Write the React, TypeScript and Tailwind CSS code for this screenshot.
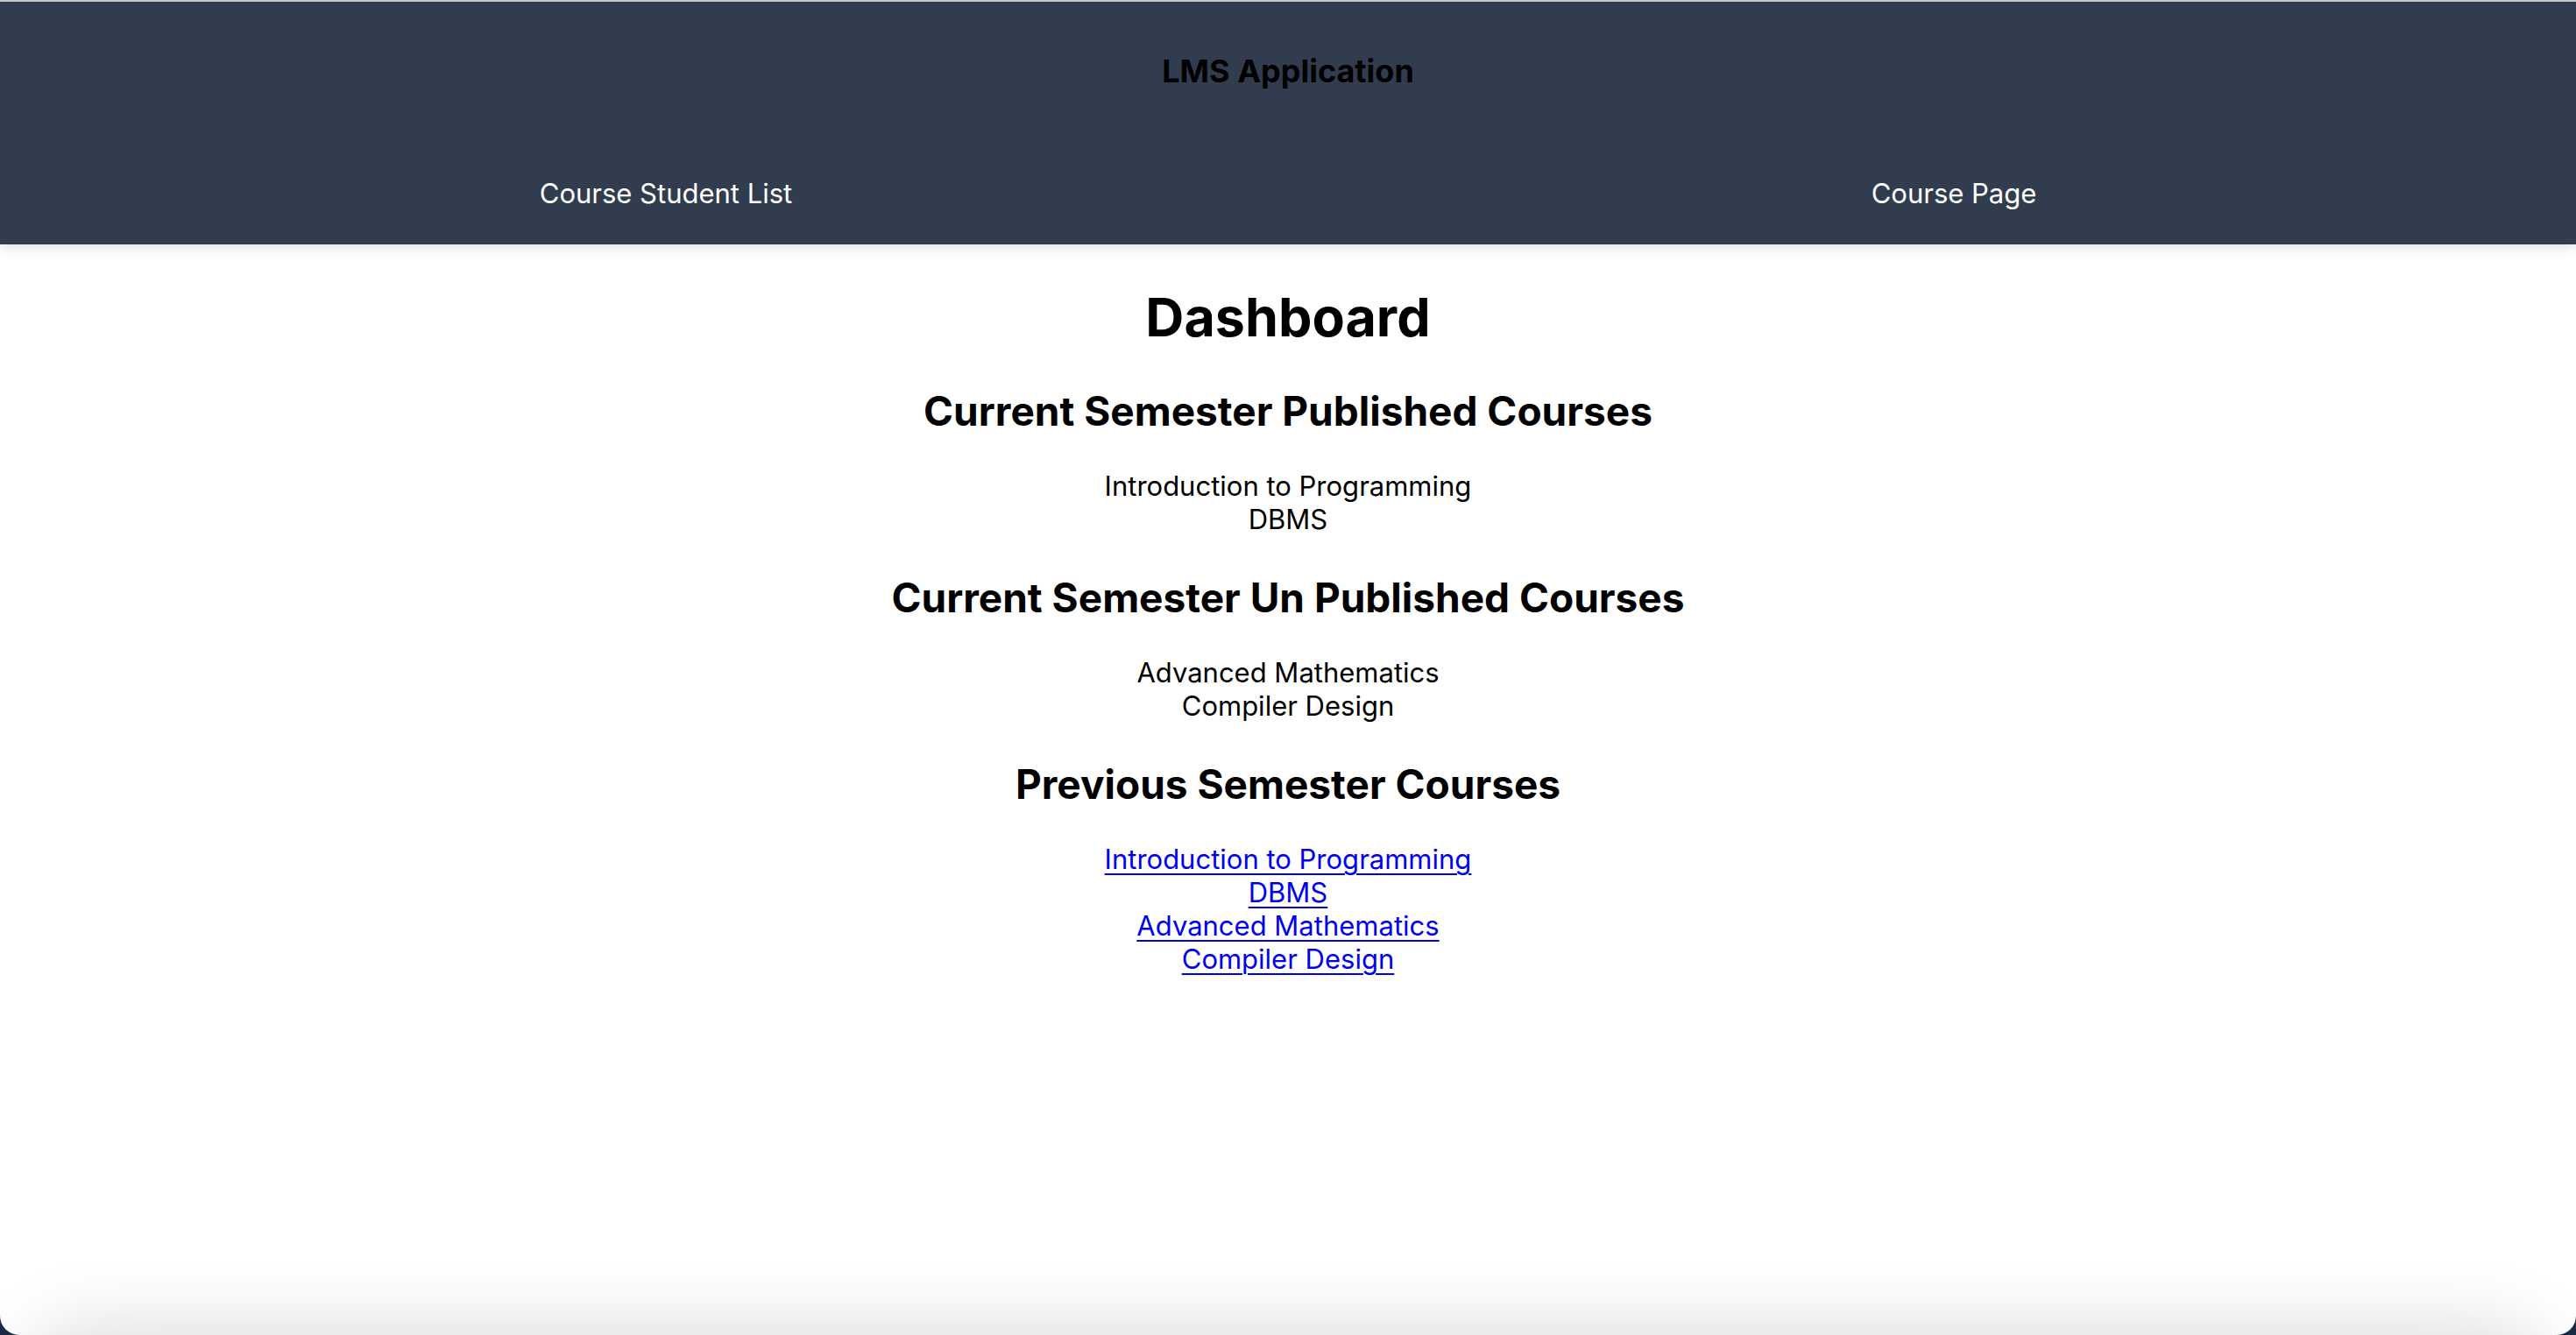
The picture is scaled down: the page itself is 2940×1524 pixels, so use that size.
import React from 'react';

const published = ['Introduction to Programming', 'DBMS'];
const unpublished = ['Advanced Mathematics', 'Compiler Design'];
const previous = ['Introduction to Programming', 'DBMS', 'Advanced Mathematics', 'Compiler Design'];

const Section: React.FC<{ title: string; children: React.ReactNode }> = ({ title, children }) => (
  <section className="mt-[43px] flex flex-col items-center">
    <h2 className="text-[46px] leading-[54px] font-bold text-black">{title}</h2>
    <div className="mt-[40px] flex flex-col items-center">{children}</div>
  </section>
);

export default function App() {
  return (
    <div className="h-screen w-full bg-[#1b2a44] font-['Inter',sans-serif]">
      <div className="h-full w-full bg-white rounded-b-[22px] overflow-hidden flex flex-col border-t-2 border-[#c9c9c9]">
        {/* Top bar */}
        <header className="h-[277px] shrink-0 bg-[#313d4f] shadow-[0_4px_12px_rgba(0,0,0,0.12)] flex flex-col relative z-10">
          <h1 className="pt-[57px] text-center text-[36px] leading-[44px] font-bold text-black">
            LMS Application
          </h1>
          <nav className="mt-[99px] grid grid-cols-2">
            <a className="pl-[50px] text-center text-[31px] leading-[38px] text-white cursor-pointer">
              Course Student List
            </a>
            <a className="pl-[50px] text-center text-[31px] leading-[38px] text-white cursor-pointer">
              Course Page
            </a>
          </nav>
        </header>

        <main className="flex-1 flex flex-col items-center text-[31px] leading-[38px] text-black">
          <h1 className="mt-[46px] text-[61px] leading-[74px] font-bold">Dashboard</h1>

          <Section title="Current Semester Published Courses">
            {published.map((c) => (
              <div key={c}>{c}</div>
            ))}
          </Section>

          <Section title="Current Semester Un Published Courses">
            {unpublished.map((c) => (
              <div key={c}>{c}</div>
            ))}
          </Section>

          <Section title="Previous Semester Courses">
            {previous.map((c) => (
              <a key={c} href="#" className="text-[#0000ee] underline underline-offset-[5px] decoration-2">
                {c}
              </a>
            ))}
          </Section>
        </main>

        {/* bottom shade */}
        <div className="h-[84px] shrink-0 relative overflow-hidden">
          <div className="absolute left-[60px] right-[60px] top-[110px] h-[100px] rounded-[60px] shadow-[0_0_80px_40px_rgba(0,0,0,0.13)]" />
        </div>
      </div>
    </div>
  );
}
